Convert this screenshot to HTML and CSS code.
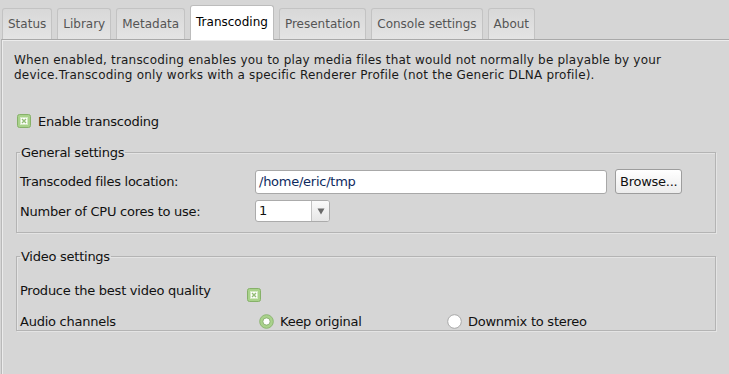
FILE: index.html
```html
<!DOCTYPE html>
<html lang="en">
	<head>
		<title>Transcoding settings</title>
		<meta charset="utf-8">
		<link rel="stylesheet" href="styles.css">
	</head>

	<body>
		<div class="tabs">
			<div class="tab">Status</div>
			<div class="tab">Library</div>
			<div class="tab">Metadata</div>
			<div class="tab selected">Transcoding</div>
			<div class="tab">Presentation</div>
			<div class="tab">Console settings</div>
			<div class="tab">About</div>
		</div>

		<div class="panel">
			<p class="intro">When enabled, transcoding enables you to play media files that would not normally be playable by your device.Transcoding only works with a specific Renderer Profile (not the Generic DLNA profile).</p>

			<div class="check-row">
				<span class="check"><svg width="14" height="14" viewBox="0 0 14 14"><rect x="0.5" y="0.5" width="13" height="13" rx="2" fill="#a9d28b" stroke="#86b169"/><rect x="3.5" y="3.5" width="7" height="7" fill="#fff" stroke="#d3e9c2"/><path d="M5 5 L9 9 M9 5 L5 9" stroke="#93bd76" stroke-width="1.4"/></svg></span>
				<span>Enable transcoding</span>
			</div>

			<fieldset class="group general">
				<legend>General settings</legend>
				<div class="row">
					<span class="label">Transcoded files location:</span>
					<span class="input">/home/eric/tmp</span>
					<span class="button">Browse...</span>
				</div>
				<div class="row">
					<span class="label">Number of CPU cores to use:</span>
					<span class="select">
						<span class="value">1</span>
						<span class="arrow"><svg width="8" height="7" viewBox="0 0 8 7"><path d="M0.5 0.5 L7.5 0.5 L4 6.5 Z" fill="#6a6a6a"/></svg></span>
					</span>
				</div>
			</fieldset>

			<fieldset class="group video">
				<legend>Video settings</legend>
				<div class="row quality">
					<span class="label short">Produce the best video quality</span>
					<span class="check low"><svg width="14" height="14" viewBox="0 0 14 14"><rect x="0.5" y="0.5" width="13" height="13" rx="2" fill="#a9d28b" stroke="#86b169"/><rect x="3.5" y="3.5" width="7" height="7" fill="#fff" stroke="#d3e9c2"/><path d="M5 5 L9 9 M9 5 L5 9" stroke="#93bd76" stroke-width="1.4"/></svg></span>
				</div>
				<div class="row audio">
					<span class="label short">Audio channels</span>
					<span class="option first">
						<svg width="15" height="15" viewBox="0 0 15 15"><circle cx="7.5" cy="7.5" r="6.8" fill="#a9d28b" stroke="#8db673"/><circle cx="7.5" cy="7.5" r="3.6" fill="#fff" stroke="#7fa566" stroke-width="0.8"/></svg>
						Keep original
					</span>
					<span class="option">
						<svg width="15" height="15" viewBox="0 0 15 15"><circle cx="7.5" cy="7.5" r="6.8" fill="#fff" stroke="#a9a9a9"/></svg>
						Downmix to stereo
					</span>
				</div>
			</fieldset>
		</div>
	</body>
</html>
```

FILE: styles.css
```css
body {
	margin: 0;
	background: #d6d6d6;
	color: #111;
	font-family: "DejaVu Sans", sans-serif;
	font-size: 13px;
	letter-spacing: -0.25px;
	overflow: hidden;
}

.tabs {
	display: flex;
	align-items: flex-end;
	gap: 5px;
	height: 39px;
	padding-left: 2px;
	position: relative;
	z-index: 2;
	font-size: 12px;
	letter-spacing: 0;
}

.tab {
	height: 30px;
	line-height: 30px;
	padding: 0 5px;
	border: 1px solid #c3c3c3;
	border-bottom: none;
	border-radius: 3px 3px 0 0;
	background: linear-gradient(#d8d8d8, #e4e4e4);
	color: #555;
}

.tab.selected {
	height: 34px;
	line-height: 33px;
	margin-bottom: -1px;
	background: #fff;
	color: #000;
	border-color: #bcbcbc;
}

.panel {
	width: 760px;
	height: 340px;
	margin-left: 1px;
	padding: 0 12px;
	border-top: 1px solid #a9a9a9;
	border-left: 1px solid #b9b9b9;
	box-shadow: inset 1px 1px #ececec;
	box-sizing: border-box;
}

.intro {
	margin: 13px 0 0;
	font-size: 12px;
	letter-spacing: 0.2px;
	line-height: 15px;
	color: #1a1a1a;
	width: 675px;
}

.check-row {
	display: flex;
	align-items: center;
	gap: 7px;
	height: 16px;
	margin: 30px 0 0 3px;
}

.check {
	display: flex;
	width: 14px;
	height: 14px;
}

.group {
	width: 700px;
	margin: 16px 0 0 2px;
	padding: 9px 0 10px 3px;
	border: 1px solid #b4b4b4;
	box-shadow: inset 1px 1px #e4e4e4, 1px 1px #e4e4e4;
	box-sizing: border-box;
}

.group legend {
	padding: 0 1px;
	margin-left: 0;
	line-height: 15px;
}

.row {
	display: flex;
	align-items: center;
}

.general .row + .row {
	margin-top: 6px;
}

.label {
	width: 235px;
	flex: none;
}

.label.short {
	width: 227px;
}

.input {
	width: 352px;
	height: 24px;
	line-height: 22px;
	padding-left: 3px;
	background: #fff;
	border: 1px solid #a8a8a8;
	border-radius: 3px;
	box-sizing: border-box;
	color: #0d2a5e;
}

.button {
	height: 25px;
	line-height: 23px;
	margin-left: 8px;
	padding: 0 4px;
	border: 1px solid #9d9d9d;
	border-radius: 3px;
	background: linear-gradient(#ffffff, #ececec);
	box-sizing: border-box;
}

.select {
	display: flex;
	width: 75px;
	height: 22px;
	border: 1px solid #ababab;
	border-radius: 3px;
	background: #fff;
	box-sizing: border-box;
	overflow: hidden;
}

.select .value {
	width: 52px;
	line-height: 20px;
	padding-left: 3px;
	border-right: 1px solid #c2c2c2;
}

.select .arrow {
	flex: 1;
	display: flex;
	align-items: center;
	justify-content: center;
	background: linear-gradient(#fafafa, #e6e6e6);
}

.video {
	padding: 19px 0 1px 3px;
}

.quality {
	align-items: flex-start;
	height: 20px;
	line-height: 15px;
}

.check.low {
	margin-top: 5px;
}

.audio {
	height: 16px;
	margin-top: 10px;
}

.option {
	display: flex;
	align-items: center;
	gap: 6px;
}

.option.first {
	width: 188px;
	margin-left: 12px;
}
```
